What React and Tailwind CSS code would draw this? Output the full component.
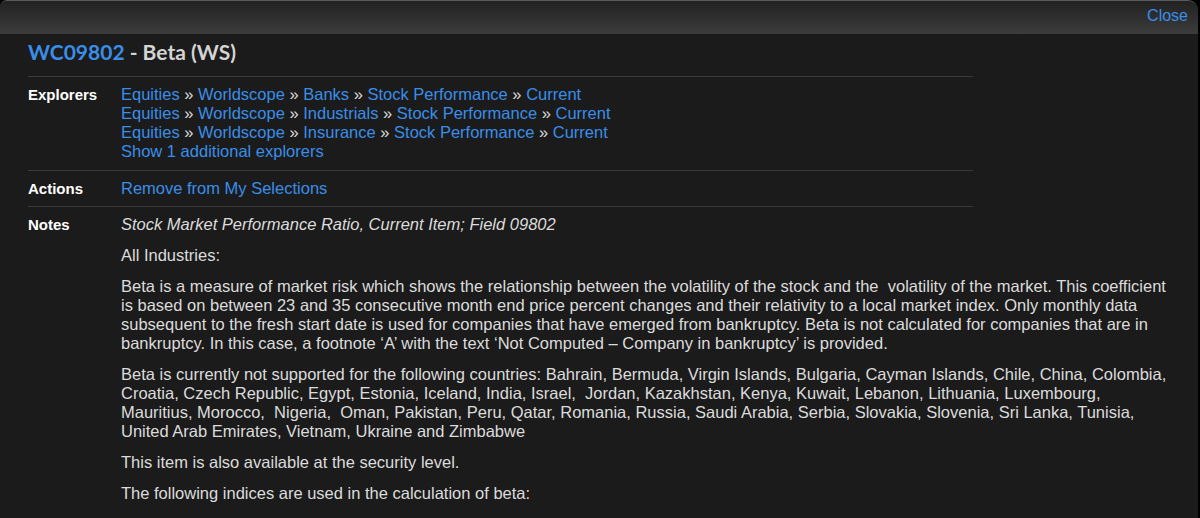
const explorers = [
  ["Equities", "Worldscope", "Banks", "Stock Performance", "Current"],
  ["Equities", "Worldscope", "Industrials", "Stock Performance", "Current"],
  ["Equities", "Worldscope", "Insurance", "Stock Performance", "Current"],
];

const Link = ({ children }) => (
  <a href="#" className="text-[#3a8ee8] hover:underline">
    {children}
  </a>
);

const Row = ({ label, children }) => (
  <div className="flex w-[1150px]">
    <div className="w-[93px] shrink-0 text-[15px] font-bold text-white leading-[19px]">
      {label}
    </div>
    <div className="flex-1">{children}</div>
  </div>
);

// lines as they break in the original
const Lines = ({ lines, className = "" }) => (
  <p className={`whitespace-nowrap ${className}`}>
    {lines.map((l, i) => (
      <span key={i}>
        {l}
        {i < lines.length - 1 && <br />}
      </span>
    ))}
  </p>
);

const App = () => {
  return (
    <div className="h-[518px] w-[1200px] overflow-hidden bg-black font-['Liberation_Sans',Arial,sans-serif]">
      <div className="h-full mr-[2px] rounded-tl-[7px] rounded-tr-[10px] border-t border-[#5a5a5a] bg-[#1b1b1b] overflow-hidden">
        <div className="h-[33px] bg-gradient-to-b from-[#222222] to-[#3c3c3c] flex justify-end items-start pt-[7px] pr-[10px]">
          <a href="#" className="text-[16px] text-[#3a8ee8] leading-[16px]">
            Close
          </a>
        </div>
        <div className="pl-[28px]">
          <h1 className="pt-[3px] pb-[9px] w-[945px] border-b border-[#3a3a3a] font-['Lato',sans-serif] font-bold text-[21px] leading-[30px]">
            <span className="text-[#3a8ee8]">WC09802</span>
            <span className="text-[#d4d4d4]"> - Beta (WS)</span>
          </h1>
          <div className="text-[16.5px] leading-[19px] text-[#dcdcdc]">
            <div className="w-[945px] border-b border-[#3a3a3a] pt-[8px] pb-[9px]">
              <Row label="Explorers">
                {explorers.map((path, i) => (
                  <div key={i}>
                    {path.map((p, j) => (
                      <span key={j}>
                        {j > 0 && <span className="text-[#dcdcdc]"> » </span>}
                        <Link>{p}</Link>
                      </span>
                    ))}
                  </div>
                ))}
                <div>
                  <Link>Show 1 additional explorers</Link>
                </div>
              </Row>
            </div>
            <div className="w-[945px] border-b border-[#3a3a3a] pt-[8px] pb-[8px]">
              <Row label="Actions">
                <Link>Remove from My Selections</Link>
              </Row>
            </div>
            <div className="pt-[8px]">
              <Row label="Notes">
                <div className="flex flex-col gap-[12px]">
                  <p className="italic">
                    Stock Market Performance Ratio, Current Item; Field 09802
                  </p>
                  <p>All Industries:</p>
                  <Lines
                    lines={[
                      "Beta is a measure of market risk which shows the relationship between the volatility of the stock and the\u00a0 volatility of the market. This coefficient",
                      "is based on between 23 and 35 consecutive month end price percent changes and their relativity to a local market index. Only monthly data",
                      "subsequent to the fresh start date is used for companies that have emerged from bankruptcy. Beta is not calculated for companies that are in",
                      "bankruptcy. In this case, a footnote ‘A’ with the text ‘Not Computed – Company in bankruptcy’ is provided.",
                    ]}
                  />
                  <Lines
                    lines={[
                      "Beta is currently not supported for the following countries: Bahrain, Bermuda, Virgin Islands, Bulgaria, Cayman Islands, Chile, China, Colombia,",
                      "Croatia, Czech Republic, Egypt, Estonia, Iceland, India, Israel,\u00a0 Jordan, Kazakhstan, Kenya, Kuwait, Lebanon, Lithuania, Luxembourg,",
                      "Mauritius, Morocco,\u00a0 Nigeria,\u00a0 Oman, Pakistan, Peru, Qatar, Romania, Russia, Saudi Arabia, Serbia, Slovakia, Slovenia, Sri Lanka, Tunisia,",
                      "United Arab Emirates, Vietnam, Ukraine and Zimbabwe",
                    ]}
                  />
                  <p>This item is also available at the security level.</p>
                  <p>The following indices are used in the calculation of beta:</p>
                </div>
              </Row>
            </div>
          </div>
        </div>
      </div>
    </div>
  );
};

export default App;
